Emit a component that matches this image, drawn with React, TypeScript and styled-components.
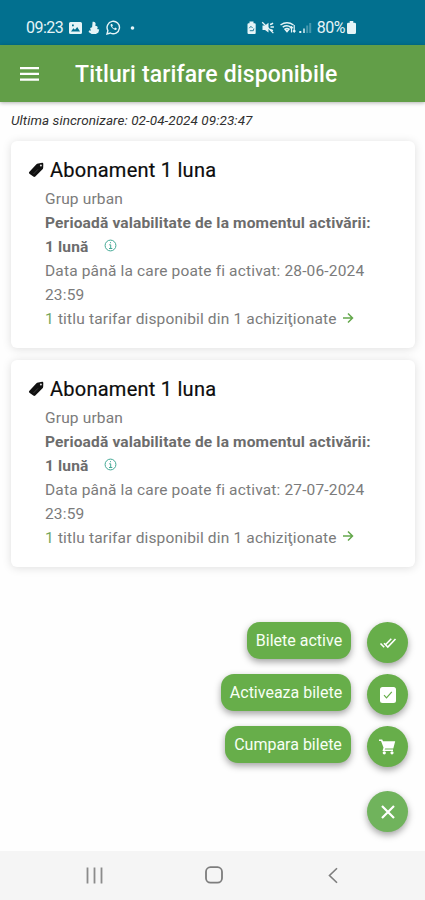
import React from "react";
import styled, { createGlobalStyle } from "styled-components";

const GlobalStyle = createGlobalStyle`
  * { box-sizing: border-box; }
  body { margin: 0; background: #fff; font-family: Roboto, "Noto Sans", sans-serif; }
`;

const Screen = styled.div`
  display: flex;
  flex-direction: column;
  width: 425px;
  height: 900px;
  overflow: hidden;
  background: #fefefe;
`;

const StatusBar = styled.div`
  display: flex;
  justify-content: space-between;
  flex: none;
  height: 44.5px;
  padding: 10px 69px 0 26px;
  background: #02708f;
  color: #e6f4f7;
`;

const StatusGroup = styled.div<{ $gap: number }>`
  display: flex;
  align-items: center;
  height: 35px;
  gap: ${(p) => p.$gap}px;
`;

const StatusText = styled.span<{ $spacing: number }>`
  font-size: 16px;
  line-height: 35px;
  letter-spacing: ${(p) => p.$spacing}px;
  white-space: nowrap;
`;

const Header = styled.header`
  display: flex;
  align-items: center;
  flex: none;
  height: 57.5px;
  padding: 1px 0 0 20px;
  gap: 36px;
  background: #629e48;
  color: #fff;
  box-shadow: 0 1px 4px rgba(0, 0, 0, 0.3);
`;

const Title = styled.h1`
  margin: 0;
  padding-top: 1px;
  font-size: 23px;
  font-weight: 500;
  letter-spacing: 0.13px;
  white-space: nowrap;
`;

const SyncText = styled.p`
  flex: none;
  margin: 0;
  padding: 6px 0 0 11px;
  height: 39px;
  font-size: 13.5px;
  line-height: 24px;
  font-style: italic;
  color: #303030;
  letter-spacing: 0.07px;
  white-space: nowrap;
`;

const CardList = styled.main`
  display: flex;
  flex-direction: column;
  flex: none;
  gap: 11.5px;
  padding: 0 10px 0 11px;
`;

const Card = styled.section`
  height: 207px;
  padding: 17px 0 0 17px;
  border-radius: 6px;
  background: #fff;
  box-shadow: 0 1px 10px rgba(0, 0, 0, 0.13);
`;

const CardTitle = styled.h2`
  display: flex;
  align-items: center;
  gap: 5px;
  margin: 0;
  height: 24px;
  font-size: 20px;
  font-weight: 400;
  color: #0c0c0c;
  letter-spacing: 0.25px;
  -webkit-text-stroke: 0.2px #0c0c0c;
  white-space: nowrap;
`;

const CardBody = styled.div`
  display: flex;
  flex-direction: column;
  padding: 5px 0 0 17px;
`;

const Line = styled.div<{ $strong?: boolean }>`
  display: flex;
  align-items: center;
  height: 24px;
  font-size: 15.5px;
  font-weight: ${(p) => (p.$strong ? 700 : 400)};
  color: ${(p) => (p.$strong ? "#6c6c6c" : "#7b7b7b")};
  letter-spacing: 0.16px;
  white-space: pre;
`;

const Count = styled.span`
  color: #74a75e;
`;

const InfoIcon = styled.svg`
  margin: -3px 0 0 16px;
`;

const ArrowIcon = styled.svg`
  margin: -3px 0 0 5px;
`;

const Actions = styled.div`
  display: flex;
  flex-direction: column;
  align-items: flex-end;
  flex: none;
  margin-top: auto;
  gap: 10px;
  padding: 0 17px 18px 0;
`;

const ActionRow = styled.div`
  display: flex;
  align-items: flex-start;
  gap: 16px;
  height: 42px;
  &:last-child { margin-top: 13px; }
`;

const ActionLabel = styled.button<{ $width: number }>`
  width: ${(p) => p.$width}px;
  height: 37px;
  padding: 0;
  border: 0;
  border-radius: 13px;
  background: #67ae4a;
  color: #f8fff5;
  font-family: inherit;
  font-size: 16px;
  white-space: nowrap;
  box-shadow: 0 3px 7px rgba(0, 0, 0, 0.36);
`;

const RoundButton = styled.button<{ $light?: boolean }>`
  display: flex;
  align-items: center;
  justify-content: center;
  width: 41px;
  height: 41px;
  padding: 0;
  border: 0;
  border-radius: 50%;
  color: #fff;
  background: ${(p) => (p.$light ? "#70b35c" : "#67ae4a")};
  box-shadow: 0 3px 7px rgba(0, 0, 0, 0.36);
`;

const NavBar = styled.nav`
  display: grid;
  grid-template-columns: 118.5px 118.5px 1fr;
  align-items: center;
  flex: none;
  height: 49px;
  padding: 0 0 1px 86px;
  background: #f5f5f5;
`;

const TagIcon = () => (
  <svg width="17" height="18" viewBox="0 0 17 18">
    <path d="M1.2 11.1 8.2 3.4Q9 2.5 10.3 2.4L14.2 1.8Q15.3 1.7 15.3 2.9L15.2 6.4Q15.2 7.6 14.3 8.5L7.3 15.5Q6.3 16.4 5.3 15.5L1.4 12.7Q.5 12 1.2 11.1Z" fill="#111" />
    <circle cx="12.9" cy="4.4" r="1" fill="#ddd" />
    <path d="m10 8.3-4.6 4.8" stroke="#555" strokeWidth=".6" />
  </svg>
);

const tickets = [
  { id: 1, date: "28-06-2024" },
  { id: 2, date: "27-07-2024" },
];

const Ticket = ({ date }: { date: string }) => (
  <Card>
    <CardTitle><TagIcon />Abonament 1 luna</CardTitle>
    <CardBody>
      <Line>Grup urban</Line>
      <Line $strong>Perioadă valabilitate de la momentul activării:</Line>
      <Line $strong>
        1 lună
        <InfoIcon width="13" height="13" viewBox="0 0 13 13" fill="none" stroke="#43a995">
          <circle cx="6.5" cy="6.5" r="5.4" />
          <path d="M5.2 5.8h1.5v3.6M5 9.5h3.3M6.5 3.2v1" />
        </InfoIcon>
      </Line>
      <Line>Data până la care poate fi activat: {date}</Line>
      <Line>23:59</Line>
      <Line>
        <Count>1</Count> titlu tarifar disponibil din 1 achiziţionate
        <ArrowIcon width="12" height="12" viewBox="0 0 12 12" fill="none" stroke="#64a84c" strokeWidth="1.5">
          <path d="M1 6h9.5M6 1.5 10.5 6 6 10.5" />
        </ArrowIcon>
      </Line>
    </CardBody>
  </Card>
);

export default function App() {
  return (
    <>
      <GlobalStyle />
      <Screen>
        <StatusBar>
          <StatusGroup $gap={6}>
            <StatusText $spacing={-0.5}>09:23</StatusText>
            <svg width="13" height="12" viewBox="0 0 13 12">
              <path fillRule="evenodd" fill="currentColor" d="M1.5 0h10Q13 0 13 1.5v9q0 1.5-1.5 1.5h-10Q0 12 0 10.5v-9Q0 0 1.5 0ZM2 9.5h9L8.2 5 6 7.8 4.4 6.2ZM3 2.5v1.7h1.8V2.5Z" />
            </svg>
            <svg width="12" height="14" viewBox="0 0 12 14">
              <path d="M4.6.8q2.5-.6 3 1.5L7.4 5q1.8-.5 2.2 1 .4 1-.6 2l2.2.4-.8 3.2-2.5 1.4H3.6L.6 11l.5-1.4 2-.2-1-1.7q.3-1.4 2-1.5Z" fill="currentColor" />
            </svg>
            <svg width="15" height="15" viewBox="0 0 15 15" fill="none" stroke="currentColor" strokeWidth="1.4">
              <path d="m1 14 .9-3.4A6.2 6.2 0 1 1 4.4 13Z" />
              <path d="M5 4.1c-.8.8-.5 2.3 1.2 4s3.3 2.4 4.4 1.4l.2-1-1.6-.9-.9.9C7.2 8 6.6 7.3 6.2 6.4l.7-.8-.8-1.5Z" fill="currentColor" stroke="none" />
            </svg>
            <svg width="14" height="4" viewBox="0 0 14 4"><circle cx="5.5" cy="2" r="1.8" fill="currentColor" /></svg>
          </StatusGroup>
          <StatusGroup $gap={2}>
            <svg width="69" height="14" viewBox="-3 0 69 14" fill="none" stroke="currentColor">
              <path d="M.5.5h4v1.7h1q1.2 0 1.2 1V12q0 1-1 1h-6q-1.2 0-1.2-1V3.2q0-1 1.2-1h.8Z" fill="currentColor" stroke="none" />
              <path d="m.3 7.2 1.6-1.9L3.6 7M4.9 7.5l-.6 2.2H.8" stroke="#267f9b" />
              <path d="M13.5 4.5H16l3.5-2.7v9.8L16 9h-2.5Z" fill="currentColor" stroke="none" />
              <path d="m13.2 1.3 11.2 10.8M21 3.5q2-.2 3-1.5M21.5 6h3.4M21.2 8.4l2.8 1.2" strokeWidth="1.3" />
              <path d="M31.5 4q6.5-4.5 13 0M33.7 6.2q4.3-2.7 8 0M36 8.2q2-1.3 4 0L38 10.5Z" strokeWidth="1.5" />
              <path d="M42.5 11.5V5.8m-1.4 1.4 1.4-1.5 1.4 1.5M45.2 4v7m-1.3-1.3 1.3 1.4 1.3-1.4" strokeWidth="1.2" />
              <path d="M51.3 12v-2" strokeWidth="2" />
              <path d="M55 12V7.5" strokeWidth="2" opacity=".7" />
              <path d="M58.2 12V4.5M61.2 12V2" strokeWidth="2" opacity=".3" />
            </svg>
            <StatusText $spacing={-0.5}>80%</StatusText>
            <svg width="9" height="13" viewBox="0 0 9 13"><path d="M2.7 0h3.6v1.7h1.2Q9 1.7 9 3v8.5Q9 13 7.5 13h-6Q0 13 0 11.5V3q0-1.3 1.5-1.3h1.2Z" fill="currentColor" /></svg>
          </StatusGroup>
        </StatusBar>
        <Header>
          <svg width="19" height="14" viewBox="0 0 19 14" fill="#fff"><path d="M0 0h19v2.3H0zM0 5.8h19v2.3H0zM0 11.5h19v2.3H0z" /></svg>
          <Title>Titluri tarifare disponibile</Title>
        </Header>
        <SyncText>Ultima sincronizare: 02-04-2024 09:23:47</SyncText>
        <CardList>
          {tickets.map((t) => <Ticket key={t.id} date={t.date} />)}
        </CardList>
        <Actions>
          <ActionRow>
            <ActionLabel $width={104}>Bilete active</ActionLabel>
            <RoundButton>
              <svg width="18" height="14" viewBox="0 0 18 14" fill="none" stroke="#fff" strokeWidth="1.6">
                <path d="m1.5 7.5 3.7 3.8M5 7.3l3.8 3.8L16.5 3M6 9.2 12.3 2.8" />
              </svg>
            </RoundButton>
          </ActionRow>
          <ActionRow>
            <ActionLabel $width={130}>Activeaza bilete</ActionLabel>
            <RoundButton>
              <svg width="16" height="16" viewBox="0 0 16 16">
                <rect width="16" height="16" rx="2.5" fill="#fff" />
                <path d="m4 8.2 2.5 2.6 5.3-6" fill="none" stroke="#67ae4a" strokeWidth="1.2" />
              </svg>
            </RoundButton>
          </ActionRow>
          <ActionRow>
            <ActionLabel $width={126}>Cumpara bilete</ActionLabel>
            <RoundButton>
              <svg width="17" height="16" viewBox="0 0 17 16" fill="#fff">
                <path d="M0 .5h3.2l.8 1.8h12.2L14.3 9.5H6.2l-.5.9H14V12H3.5l1-3.5L2 2H0Z" />
                <circle cx="5.3" cy="13.8" r="1.6" /><circle cx="13" cy="13.8" r="1.6" />
              </svg>
            </RoundButton>
          </ActionRow>
          <ActionRow>
            <RoundButton $light>
              <svg width="14" height="14" viewBox="0 0 14 14" stroke="#fff" strokeWidth="2.2"><path d="m1 1 12 12M13 1 1 13" /></svg>
            </RoundButton>
          </ActionRow>
        </Actions>
        <NavBar>
          <svg width="17" height="17" viewBox="0 0 17 17" stroke="#8b8b8b" strokeWidth="1.8"><path d="M1.5.5v16M8.5.5v16M15.5.5v16" /></svg>
          <svg width="18" height="18" viewBox="0 0 18 18"><rect x="1" y="1.2" width="16" height="15.5" rx="4.5" fill="none" stroke="#7d7d7d" strokeWidth="1.8" /></svg>
          <svg width="17" height="17" viewBox="-5 0 17 17" fill="none" stroke="#7d7d7d" strokeWidth="1.6"><path d="M9 1.2 1.5 8.5 9 15.8" /></svg>
        </NavBar>
      </Screen>
    </>
  );
}
